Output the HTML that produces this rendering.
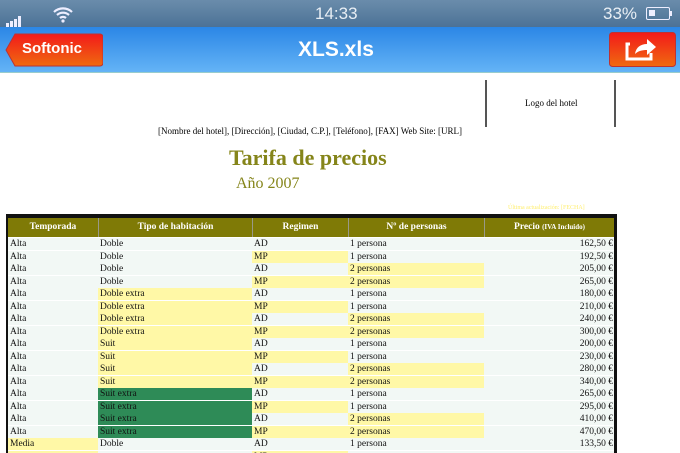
<!DOCTYPE html><html><head><meta charset="utf-8"><style>
*{margin:0;padding:0;box-sizing:border-box}
html,body{width:680px;height:453px;overflow:hidden}
body{background:#fff;position:relative;font-family:"Liberation Serif",serif}
.sb{position:absolute;left:0;top:0;width:680px;height:27px;background:linear-gradient(#6a8cab,#4c7296);color:#e8eef4;font-family:"Liberation Sans",sans-serif}
.nav{position:absolute;left:0;top:27px;width:680px;height:46px;background:linear-gradient(#2b86e6,#64b3f6);border-bottom:1px solid #9cc;}
.t{position:absolute;font-family:"Liberation Sans",sans-serif;color:#fff;font-weight:bold}
.r{position:absolute;left:8px;width:606px;height:13px;font-size:9.5px;line-height:12px;color:#111;background:#fff}
.r div{position:absolute;top:0;height:12px;padding-left:2px;background:#f2f8f5}
.y{background:#fff8a6!important}.g{background:#2e8b57!important}
</style></head><body>
<div class="sb">
<div style="position:absolute;left:6px;top:9px">
<span style="display:inline-block;width:3px;height:4px;background:#eef;margin-right:1px;vertical-align:bottom"></span><span style="display:inline-block;width:3px;height:6px;background:#eef;margin-right:1px;vertical-align:bottom"></span><span style="display:inline-block;width:3px;height:8px;background:#eef;margin-right:1px;vertical-align:bottom"></span><span style="display:inline-block;width:3px;height:11px;background:#eef;vertical-align:bottom"></span></div>
<svg style="position:absolute;left:52px;top:5px" width="22" height="18" viewBox="0 0 22 18"><path d="M2 7a13 13 0 0 1 18 0M5 10a9 9 0 0 1 12 0M8 13a4.5 4.5 0 0 1 6 0" stroke="#eef" stroke-width="2.2" fill="none"/><circle cx="11" cy="16" r="1.6" fill="#eef"/></svg>
<div style="position:absolute;left:315px;top:4px;font-size:17px">14:33</div>
<div style="position:absolute;left:603px;top:4px;font-size:17px">33%</div>
<div style="position:absolute;left:646px;top:7px;width:24px;height:13px;border:1.5px solid #eef;border-radius:2px"><div style="margin:2px;width:6px;height:6px;background:#eef"></div></div>
<div style="position:absolute;left:670px;top:11px;width:2px;height:5px;background:#eef"></div>
</div>
<div class="nav">
<svg style="position:absolute;left:5px;top:6px" width="98" height="34"><path d="M10 1H95a3 3 0 0 1 3 3V30a3 3 0 0 1-3 3H10L1 17Z" fill="url(#gr)" stroke="#b33" stroke-width="1"/><defs><linearGradient id="gr" x1="0" y1="0" x2="0" y2="1"><stop offset="0" stop-color="#f21a1a"/><stop offset="1" stop-color="#f06a10"/></linearGradient></defs></svg>
<div class="t" style="left:22px;top:13px;font-size:15px">Softonic</div>
<div class="t" style="left:298px;top:11px;font-size:21px">XLS.xls</div>
<svg style="position:absolute;left:609px;top:5px" width="67" height="35"><rect x="0.5" y="0.5" width="66" height="34" rx="3" fill="url(#gr)" stroke="#b33"/><path d="M21 12h-3v15h24v-6" stroke="#fff" stroke-width="3" fill="none"/><path d="M26 22c1-7 6-10 12-10v-5l9 8-9 8v-5c-5 0-9 1-12 4z" fill="#fff"/></svg>
</div>
<div style="position:absolute;left:485px;top:80px;width:2px;height:47px;background:#555"></div>
<div style="position:absolute;left:614px;top:80px;width:2px;height:47px;background:#555"></div>
<div style="position:absolute;left:525px;top:98px;font-size:9px">Logo del hotel</div>
<div style="position:absolute;left:158px;top:126px;font-size:9px">[Nombre del hotel], [Dirección], [Ciudad, C.P.], [Teléfono], [FAX] Web Site: [URL]</div>
<div style="position:absolute;left:229px;top:145px;font-size:22px;font-weight:bold;color:#85851a">Tarifa de precios</div>
<div style="position:absolute;left:236px;top:175px;font-size:16px;color:#85851a">Año 2007</div>
<div style="position:absolute;left:508px;top:205px;font-size:6px;color:#ffef70">Última actualización: [FECHA]</div>
<div style="position:absolute;left:6px;top:214px;width:611px;height:239px;background:#111"></div>
<div style="position:absolute;left:8px;top:218px;width:606px;height:19px;background:#7f7a06;color:#fff;font-weight:bold;font-size:9.5px;line-height:19px">
<div style="position:absolute;left:0;width:90px;text-align:center">Temporada</div>
<div style="position:absolute;left:90px;width:154px;text-align:center;border-left:1px solid #998">Tipo de habitación</div>
<div style="position:absolute;left:244px;width:96px;text-align:center;border-left:1px solid #998">Regimen</div>
<div style="position:absolute;left:340px;width:136px;text-align:center;border-left:1px solid #998">Nº de personas</div>
<div style="position:absolute;left:476px;width:130px;text-align:center;border-left:1px solid #998">Precio <span style="font-size:7px">(IVA Incluido)</span></div>
</div>
<div style="position:absolute;left:8px;top:237px;width:606px;height:216px;background:#fff"></div>
<div id="rows"></div>
<script>
var d=[["Alta","Doble","","AD","1 persona","","162,50 €"],["Alta","Doble","","MP","1 persona","","192,50 €"],["Alta","Doble","","AD","2 personas","y","205,00 €"],["Alta","Doble","","MP","2 personas","y","265,00 €"],
["Alta","Doble extra","y","AD","1 persona","","180,00 €"],["Alta","Doble extra","y","MP","1 persona","","210,00 €"],["Alta","Doble extra","y","AD","2 personas","y","240,00 €"],["Alta","Doble extra","y","MP","2 personas","y","300,00 €"],
["Alta","Suit","y","AD","1 persona","","200,00 €"],["Alta","Suit","y","MP","1 persona","","230,00 €"],["Alta","Suit","y","AD","2 personas","y","280,00 €"],["Alta","Suit","y","MP","2 personas","y","340,00 €"],
["Alta","Suit extra","g","AD","1 persona","","265,00 €"],["Alta","Suit extra","g","MP","1 persona","","295,00 €"],["Alta","Suit extra","g","AD","2 personas","y","410,00 €"],["Alta","Suit extra","g","MP","2 personas","y","470,00 €"],
["Media","Doble","","AD","1 persona","","133,50 €"],["","","","MP","","",""]];
var h="";d.forEach(function(r,i){var t=Math.round(238+i*12.5);var tc=r[0]=="Media"||(i==17)?"y":"";
h+='<div class="r" style="top:'+t+'px"><div class="'+tc+'" style="left:0;width:90px">'+r[0]+'</div><div class="'+r[2]+'" style="left:90px;width:154px">'+r[1]+'</div><div class="'+(r[3]=="MP"?"y":"")+'" style="left:244px;width:96px">'+r[3]+'</div><div class="'+r[5]+'" style="left:340px;width:136px">'+r[4]+'</div><div style="left:476px;width:130px;text-align:right;padding-right:1px">'+r[6]+'</div></div>';});
document.getElementById("rows").innerHTML=h;
</script>
</body></html>
